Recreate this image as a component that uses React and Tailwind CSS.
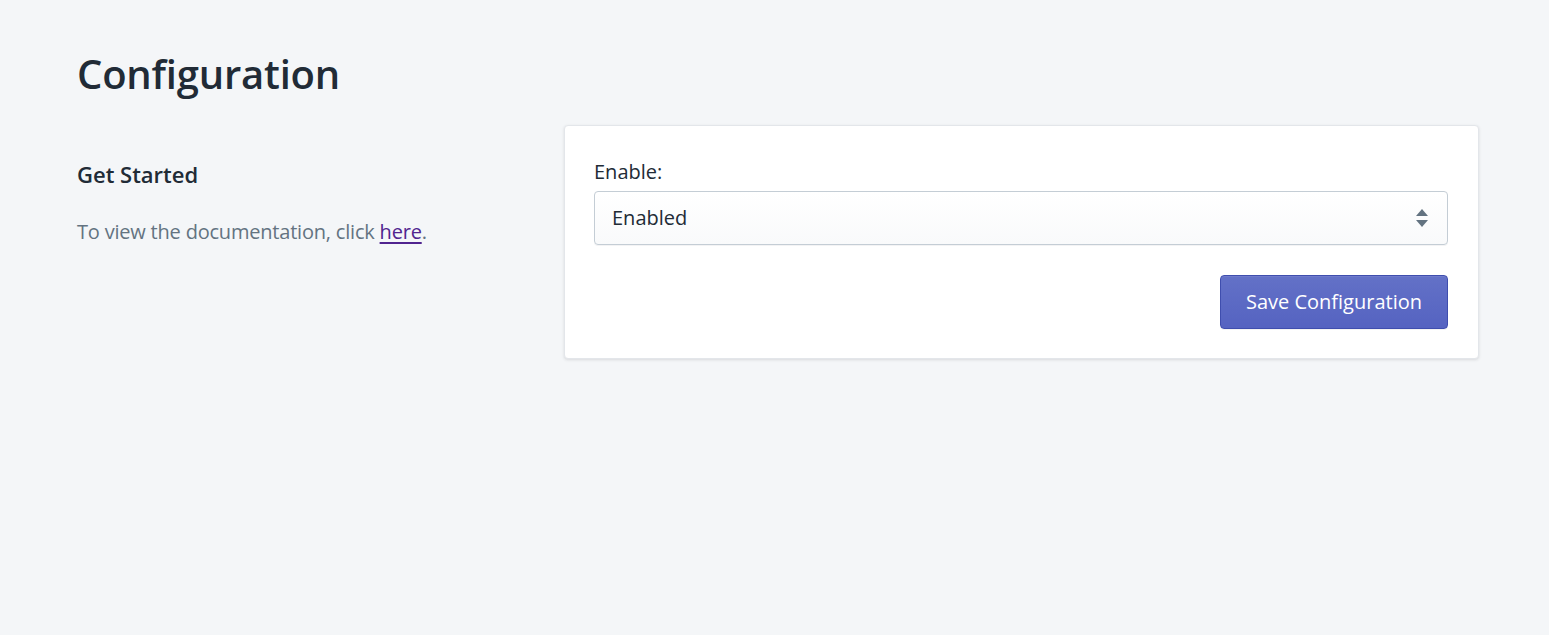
export default function App() {
  return (
    <div
      className="min-h-screen bg-[#f4f6f8] text-[#212b36]"
      style={{ fontFamily: '"Open Sans", "Noto Sans", sans-serif' }}
    >
      <div className="px-[77px] pt-[46px]">
        <h1 className="text-[40px] leading-[56px] font-semibold tracking-[-0.2px] text-[#212b36]">
          Configuration
        </h1>

        <div className="mt-[23px] flex">
          {/* Left: annotation */}
          <div className="w-[487px] shrink-0 pt-[33px]">
            <h2 className="text-[22px] leading-[32px] font-semibold">Get Started</h2>
            <p className="mt-[28px] text-[20px] leading-[28px] tracking-[-0.2px] text-[#637381]">
              To view the documentation, click{' '}
              <a href="#" className="text-[#50248f] underline underline-offset-[3px]">
                here
              </a>
              .
            </p>
          </div>

          {/* Right: card */}
          <div className="flex-1 mr-[-7px] rounded-[4px] bg-white border border-[#e3e6ea] shadow-[0_1px_3px_rgba(63,63,68,0.15)] pl-[29px] pr-[30px] pt-[32px] pb-[29px]">
            <label className="block text-[20px] leading-[28px] text-[#212b36]">Enable:</label>
            <div className="relative mt-[5px]">
              <select
                defaultValue="enabled"
                className="block w-full h-[54px] appearance-none rounded-[4px] border border-[#c4cdd5] bg-gradient-to-b from-white to-[#f9fafb] pl-[17px] pr-12 text-[20px] text-[#212b36] shadow-[0_1px_0_rgba(22,29,37,0.05)]"
              >
                <option value="enabled">Enabled</option>
                <option value="disabled">Disabled</option>
              </select>
              <svg
                className="pointer-events-none absolute right-[19px] top-1/2 -translate-y-1/2"
                width="14"
                height="20"
                viewBox="0 0 14 20"
              >
                <path d="M7 1 L13 8 H1 Z" fill="#637381" />
                <path d="M7 19 L13 12 H1 Z" fill="#637381" />
              </svg>
            </div>
            <div className="mt-[30px] flex justify-end">
              <button className="h-[54px] px-[25px] rounded-[4px] border border-[#3f4eae] bg-gradient-to-b from-[#6371c7] to-[#5563c1] text-white text-[20px] shadow-[inset_0_1px_0_0_#6f7bcb,0_1px_0_0_rgba(22,29,37,0.05)]">
                Save Configuration
              </button>
            </div>
          </div>
        </div>
      </div>
    </div>
  )
}
